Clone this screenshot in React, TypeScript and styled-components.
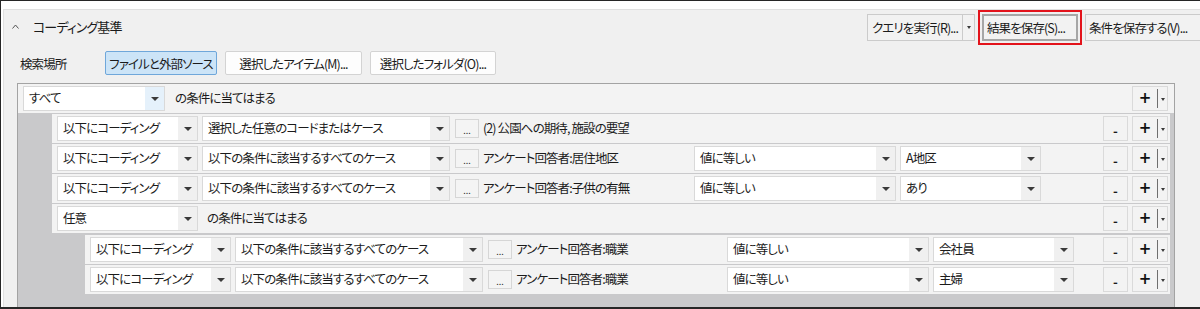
import React from 'react';
import styled, { createGlobalStyle } from 'styled-components';

const GlobalStyle = createGlobalStyle`
	html, body {
		margin: 0;
		padding: 0;
		background: #ffffff;
	}
	body {
		font-family: "Noto Sans CJK JP", "Noto Sans", sans-serif;
		font-size: 12.5px;
		letter-spacing: -0.9px;
		color: #1b1b1b;
		font-feature-settings: "palt";
	}
`;

const Frame = styled.div`
	display: flex;
	width: 1200px;
	height: 309px;
	box-sizing: border-box;
	padding: 8px 0 0 2px;

	background: #ffffff;
	border-top: 1px solid #262626;
	border-left: 1px solid #262626;
	border-bottom: 2px solid #262626;
	overflow: hidden;
`;

const Window = styled.div`
	display: flex;
	flex-direction: column;
	flex: 1;
	min-width: 0;

	background: #f0f0f0;
	border-top: 1px solid #e0e0e0;
	border-left: 1px solid #e0e0e0;
`;

const Header = styled.div`
	display: flex;
	align-items: center;
	height: 34px;
	padding-left: 8px;
`;

const Title = styled.div`
	display: flex;
	align-items: center;
	gap: 14px;
	line-height: 16px;
	padding-bottom: 1px;
	font-size: 13px;
`;

const Toolbar = styled.div`
	display: flex;
	align-items: center;
	gap: 3px;
	margin-left: auto;
	margin-right: -8px;
`;

const SplitButton = styled.div`
	display: flex;
	height: 27px;
	box-sizing: border-box;

	background: #f2f2f2;
	border: 1px solid #cbcbcb;
`;

const SplitMain = styled.div`
	display: flex;
	align-items: center;
	width: 95px;
	box-sizing: border-box;
	padding-left: 4px;
	border-right: 1px solid #cbcbcb;
	font-size: 12.5px;
	white-space: nowrap;
`;

const SplitArrow = styled.div`
	display: flex;
	align-items: center;
	justify-content: center;
	width: 11px;
`;

const Highlight = styled.div`
	display: flex;
	padding: 2px;
	border: 2px solid #e3131b;
`;

const ToolButton = styled.div<{ $w: number; $focus?: boolean }>`
	display: flex;
	align-items: center;
	width: ${(p) => p.$w}px;
	height: 27px;
	box-sizing: border-box;
	padding-left: 3px;

	background: #f2f2f2;
	border: ${(p) => (p.$focus ? '2px solid #a6a6a6' : '1px solid #cbcbcb')};
	font-size: 12.5px;
	white-space: nowrap;
`;

const SearchRow = styled.div`
	display: flex;
	align-items: center;
	gap: 8px;
	height: 24px;
	margin-top: 7px;
	padding-left: 16px;
`;

const SearchLabel = styled.div`
	width: 77px;
`;

const ScopeButton = styled.div<{ $w: number; $active?: boolean }>`
	display: flex;
	align-items: center;
	justify-content: center;
	width: ${(p) => p.$w}px;
	height: 24px;
	box-sizing: border-box;

	background: ${(p) => (p.$active ? '#cce4f7' : '#fdfdfd')};
	border: 1px solid ${(p) => (p.$active ? '#6fa7da' : '#d3d3d3')};
	border-radius: 2px;
	white-space: nowrap;
`;

const Panel = styled.div`
	display: flex;
	flex-direction: column;
	flex: 1;
	width: 1158px;
	box-sizing: border-box;
	margin: 8px 0 0 13px;

	background: #c9c9cb;
	border: 1px solid #a3a3a3;
	border-bottom: none;
`;

const Strip = styled.div<{ $top?: boolean }>`
	display: flex;
	align-items: center;
	gap: 4px;
	height: 29px;
	box-sizing: border-box;
	padding: 0 ${(p) => (p.$top ? 6 : 2)}px 0 5px;

	background: #f3f3f3;
`;

const Children = styled.div<{ $pad: number; $right: number }>`
	display: flex;
	flex-direction: column;
	gap: 1px;
	padding: 1px ${(p) => p.$right}px 0 ${(p) => p.$pad}px;
`;

const SelectBox = styled.div<{ $w: number }>`
	display: flex;
	width: ${(p) => p.$w}px;
	height: 25px;
	box-sizing: border-box;
	flex: 0 0 auto;

	background: #ffffff;
	border: 1px solid #d9d9d9;
`;

const SelectText = styled.div`
	display: flex;
	align-items: center;
	flex: 1;
	padding: 0 0 3px 5px;
	white-space: nowrap;
	overflow: hidden;
`;

const SelectArrow = styled.div<{ $accent?: boolean }>`
	display: flex;
	align-items: center;
	justify-content: center;
	width: 19px;
	background: ${(p) => (p.$accent ? '#e5f1fb' : '#f0f0f0')};
`;

const Caret = styled.span<{ $small?: boolean }>`
	width: 0;
	height: 0;
	border-left: ${(p) => (p.$small ? 2.5 : 4)}px solid transparent;
	border-right: ${(p) => (p.$small ? 2.5 : 4)}px solid transparent;
	border-top: ${(p) => (p.$small ? 3 : 4)}px solid #3a3a3a;
`;

const DotsButton = styled.div`
	display: flex;
	align-items: flex-end;
	justify-content: center;
	width: 24px;
	height: 19px;
	box-sizing: border-box;
	margin-left: 1px;
	padding-bottom: 2px;

	background: #f4f4f4;
	border: 1px solid #d6d6d6;
	font-size: 9px;
	line-height: 9px;
	letter-spacing: 0;
	color: #333;
`;

const FieldLabel = styled.div`
	flex: 0 0 207px;
	padding-bottom: 2px;
	white-space: nowrap;
`;

const MatchText = styled.div<{ $top?: boolean }>`
	margin-left: ${(p) => (p.$top ? 6 : 5)}px;
	padding-bottom: 2px;
	white-space: nowrap;
`;

const Spacer = styled.div`
	flex: 1;
`;

const MinusButton = styled.div`
	display: flex;
	align-items: center;
	justify-content: center;
	width: 25px;
	height: 25px;
	box-sizing: border-box;
	padding-top: 4px;

	background: #f3f3f3;
	border: 1px solid #dadada;
	font-size: 13px;
	font-weight: 700;
	letter-spacing: 0;
`;

const PlusButton = styled.div`
	display: flex;
	align-items: center;
	width: 36px;
	height: 25px;
	box-sizing: border-box;

	background: #f3f3f3;
	border: 1px solid #dadada;
`;

const PlusGlyph = styled.div`
	display: flex;
	align-items: center;
	justify-content: center;
	width: 24px;
	padding-bottom: 2px;
	font-size: 15px;
	font-weight: 700;
	letter-spacing: 0;
	color: #111;
	font-family: "DejaVu Sans", sans-serif;
`;

const PlusSep = styled.div`
	width: 1px;
	height: 19px;
	background: #6f6f6f;
`;

const PlusArrow = styled.div`
	display: flex;
	align-items: center;
	justify-content: center;
	flex: 1;
	padding-top: 2px;
`;

type Cond = {
	kind: 'cond';
	target: string;
	label: string;
	op?: string;
	value?: string;
};

type Group = {
	kind: 'group';
	mode: string;
	children: Node[];
};

type Node = Cond | Group;

const tree: Group = {
	kind: 'group',
	mode: 'すべて',
	children: [
		{ kind: 'cond', target: '選択した任意のコードまたはケース', label: '(2) 公園への期待, 施設の要望' },
		{ kind: 'cond', target: '以下の条件に該当するすべてのケース', label: 'アンケート回答者:居住地区', op: '値に等しい', value: 'A地区' },
		{ kind: 'cond', target: '以下の条件に該当するすべてのケース', label: 'アンケート回答者:子供の有無', op: '値に等しい', value: 'あり' },
		{
			kind: 'group',
			mode: '任意',
			children: [
				{ kind: 'cond', target: '以下の条件に該当するすべてのケース', label: 'アンケート回答者:職業', op: '値に等しい', value: '会社員' },
				{ kind: 'cond', target: '以下の条件に該当するすべてのケース', label: 'アンケート回答者:職業', op: '値に等しい', value: '主婦' },
			],
		},
	],
};

const Select: React.FC<{ w: number; text: string; accent?: boolean }> = ({ w, text, accent }) => (
	<SelectBox $w={w}>
		<SelectText>{text}</SelectText>
		<SelectArrow $accent={accent}>
			<Caret />
		</SelectArrow>
	</SelectBox>
);

const AddButton: React.FC = () => (
	<PlusButton>
		<PlusGlyph>+</PlusGlyph>
		<PlusSep />
		<PlusArrow>
			<Caret $small />
		</PlusArrow>
	</PlusButton>
);

const CondRow: React.FC<{ cond: Cond }> = ({ cond }) => (
	<Strip>
		<Select w={141} text='以下にコーディング' />
		<Select w={248} text={cond.target} />
		<DotsButton>...</DotsButton>
		<FieldLabel>{cond.label}</FieldLabel>
		{cond.op && <Select w={202} text={cond.op} />}
		{cond.value && <Select w={141} text={cond.value} />}
		<Spacer />
		<MinusButton>-</MinusButton>
		<AddButton />
	</Strip>
);

const GroupBlock: React.FC<{ group: Group; top?: boolean }> = ({ group, top }) => (
	<React.Fragment>
		<Strip $top={top}>
			<Select w={top ? 142 : 141} text={group.mode} accent={top} />
			<MatchText $top={top}>の条件に当てはまる</MatchText>
			<Spacer />
			{!top && <MinusButton>-</MinusButton>}
			<AddButton />
		</Strip>
		<Children $pad={top ? 34 : 33} $right={top ? 4 : 0}>
			{group.children.map((child, index) =>
				child.kind === 'cond' ? (
					<CondRow key={index} cond={child} />
				) : (
					<GroupBlock key={index} group={child} />
				)
			)}
		</Children>
	</React.Fragment>
);

const App: React.FC = () => {
	return (
		<React.Fragment>
			<GlobalStyle />
			<Frame>
				<Window>
					<Header>
						<Title>
							<svg width='7' height='5' viewBox='0 0 7 5'>
								<polyline points='0.5,4.5 3.5,1 6.5,4.5' fill='none' stroke='#555' strokeWidth='1' />
							</svg>
							<span>コーディング基準</span>
						</Title>
						<Toolbar>
							<SplitButton>
								<SplitMain>クエリを実行(R)...</SplitMain>
								<SplitArrow>
									<Caret $small />
								</SplitArrow>
							</SplitButton>
							<Highlight>
								<ToolButton $w={96} $focus>
									結果を保存(S)...
								</ToolButton>
							</Highlight>
							<ToolButton $w={123}>条件を保存する(V)...</ToolButton>
						</Toolbar>
					</Header>
					<SearchRow>
						<SearchLabel>検索場所</SearchLabel>
						<ScopeButton $w={112} $active>
							ファイルと外部ソース
						</ScopeButton>
						<ScopeButton $w={137}>選択したアイテム(M)...</ScopeButton>
						<ScopeButton $w={126}>選択したフォルダ(O)...</ScopeButton>
					</SearchRow>
					<Panel>
						<GroupBlock group={tree} top />
					</Panel>
				</Window>
			</Frame>
		</React.Fragment>
	);
};

export default App;
